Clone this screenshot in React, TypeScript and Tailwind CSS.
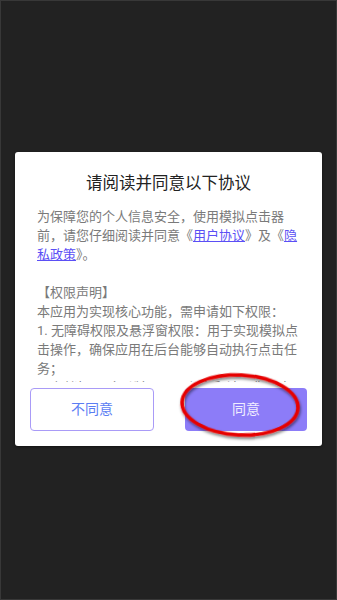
import React from "react";

const font = { fontFamily: '"Roboto", "Noto Sans CJK SC", sans-serif' };

export default function App() {
  return (
    <div
      className="relative w-[337px] h-[600px] bg-[#222222] border border-[#383838] flex flex-col items-center pt-[151px] overflow-hidden"
      style={font}
    >
      <div className="w-[307px] bg-white rounded-[3px] shadow-[0_1px_3px_rgba(0,0,0,0.5)] flex flex-col pt-[20px] pb-[15px]">
        <h1 className="text-center text-[16.5px] leading-[24px] text-[#222222]">
          请阅读并同意以下协议
        </h1>
        <div className="mt-[11px] h-[175px] overflow-hidden px-[22px] text-[13px] leading-[19px] text-[#7a7a7a]">
          <p>
            为保障您的个人信息安全，使用模拟点击器前，请您仔细阅读并同意《
            <span className="text-[#5b4ff5] underline">用户协议</span>》及《
            <span className="text-[#5b4ff5] underline">隐私政策</span>》。
          </p>
          <p className="mt-[19px]">【权限声明】</p>
          <p>本应用为实现核心功能，需申请如下权限：</p>
          <p>1. 无障碍权限及悬浮窗权限：用于实现模拟点击操作，确保应用在后台能够自动执行点击任务；</p>
          <p>2. 存储权限（可选）：用于保存和读取您的点击方案配置；</p>
          <p>3. 通知权限：用于显示运行状态。</p>
        </div>
        <div className="mt-[6px] flex gap-[31px] px-[15px]">
          <button className="flex-1 h-[43px] rounded-[4px] border-[1.5px] border-[#a99bf7] bg-white text-[14px] text-[#5b7df3]">
            不同意
          </button>
          <button className="flex-1 h-[43px] rounded-[4px] bg-[#8c7cf8] text-[14px] text-[#f0edff]">
            同意
          </button>
        </div>
      </div>
      <svg
        className="absolute left-[170px] top-[365px] pointer-events-none"
        width="140"
        height="80"
        viewBox="0 0 140 80"
      >
        <defs>
          <filter id="sh" x="-20%" y="-20%" width="140%" height="150%">
            <feDropShadow dx="1" dy="2" stdDeviation="1.5" floodColor="#000" floodOpacity="0.55" />
          </filter>
        </defs>
        <ellipse
          cx="69"
          cy="39"
          rx="58"
          ry="30"
          transform="rotate(3 69 39)"
          fill="none"
          stroke="#e60000"
          strokeWidth="3.5"
          filter="url(#sh)"
        />
      </svg>
    </div>
  );
}
